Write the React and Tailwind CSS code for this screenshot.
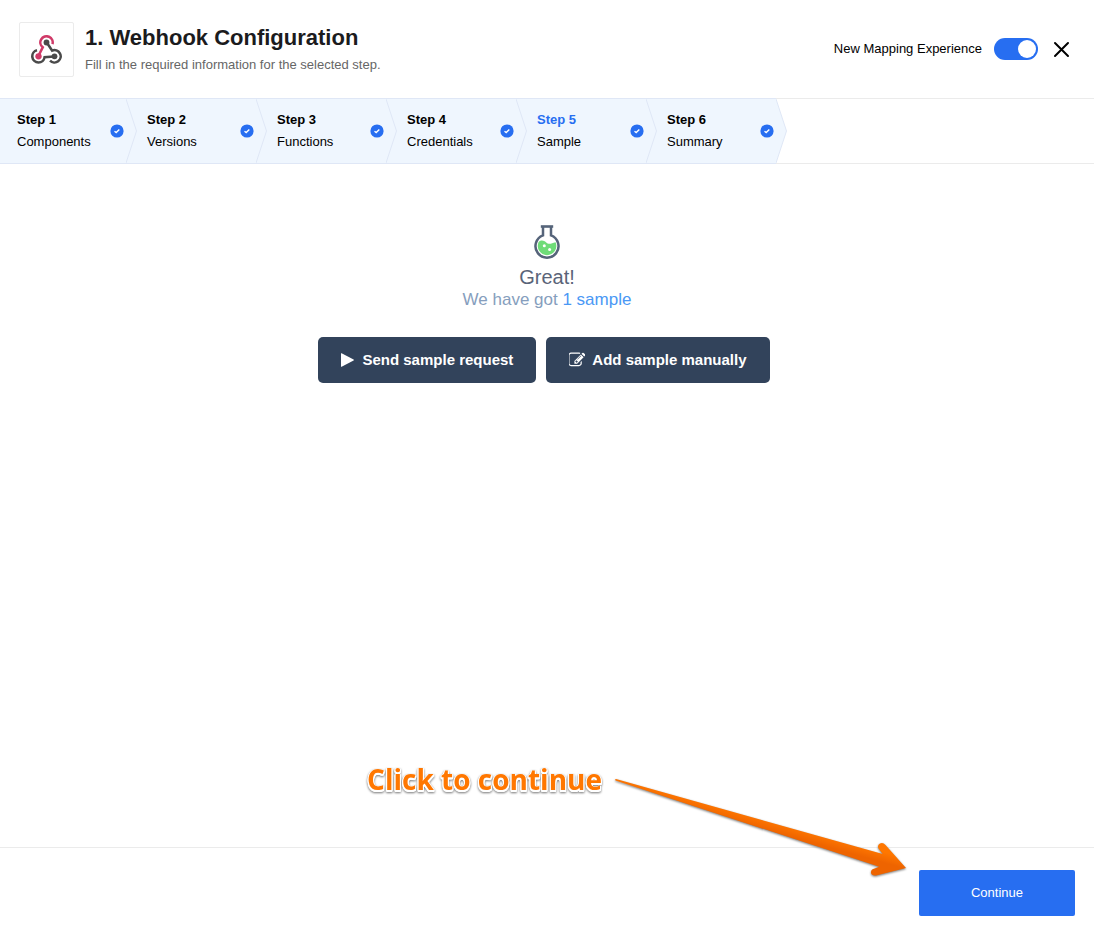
import React, { useState } from "react";

const STEPS = [
  { title: "Step 1", name: "Components" },
  { title: "Step 2", name: "Versions" },
  { title: "Step 3", name: "Functions" },
  { title: "Step 4", name: "Credentials" },
  { title: "Step 5", name: "Sample", current: true },
  { title: "Step 6", name: "Summary" },
];

function WebhookLogo() {
  const arm = "M177 74 A51 51 0 1 0 97 100 L62 170";
  return (
    <svg viewBox="0 0 256 236" className="h-[29px] w-[31px]" fill="none" strokeWidth="21" aria-hidden="true">
      <g stroke="#4a4a4a" fill="none">
        <path d={arm} transform="rotate(240 128 136)" />
        <circle cx="194" cy="174" r="24" fill="#4a4a4a" stroke="none" />
        <path d={arm} transform="rotate(120 128 136)" />
        <circle cx="128" cy="60" r="24" fill="#4a4a4a" stroke="none" />
      </g>
      <path d={arm} stroke="#d03a68" />
      <circle cx="62" cy="174" r="26" fill="#d03a68" />
    </svg>
  );
}

function CheckBadge() {
  return (
    <svg viewBox="0 0 14 14" className="size-[14px] shrink-0" aria-hidden="true">
      <circle cx="7" cy="7" r="6.6" fill="#276ef1" />
      <path d="M4.5 7.2 L6.2 8.6 L9.3 5.6" fill="none" stroke="#fff" strokeWidth="1.4" />
    </svg>
  );
}

function Flask() {
  return (
    <svg viewBox="0 0 26 34" className="h-[34px] w-[26px]" fill="none" aria-hidden="true">
      <path d="M4.6 17 C7 14.600 10 15.200 12 17.300 C14.400 19.700 17 18.800 21.600 17.200 A9.300 9.300 0 1 1 4.600 17 Z" fill="#6fdc78" />
      <path d="M9 1.5 V10.4 A11.500 11.500 0 1 0 17 10.4 V1.5" stroke="#56647a" strokeWidth="2.5" />
      <path d="M6.8 1.5 H19.2" stroke="#56647a" strokeWidth="2.6" />
      <circle cx="10.3" cy="20.8" r="1.5" fill="#fff" />
      <circle cx="15.6" cy="24.4" r="1.5" fill="#fff" />
    </svg>
  );
}

function EditIcon() {
  return (
    <svg viewBox="80 64 1664 1664" className="size-[16px]" fill="currentColor" aria-hidden="true">
      <path d="M888 1184l116-116-152-152-116 116v56h96v96h56zm440-720q-16-16-33 1l-350 350q-17 17-1 33t33-1l350-350q17-17 1-33zm80 594v190q0 119-84.500 203.500t-203.500 84.500h-832q-119 0-203.500-84.500t-84.500-203.500v-832q0-119 84.500-203.500t203.500-84.500h832q63 0 117 25 15 7 18 23 3 17-9 29l-49 49q-14 14-32 8-23-6-45-6h-832q-66 0-113 47t-47 113v832q0 66 47 113t113 47h832q66 0 113-47t47-113v-126q0-13 9-22l64-64q15-15 35-7t20 29zm-96-738l288 288-672 672h-288v-288zm444 132l-92 92-288-288 92-92q28-28 68-28t68 28l152 152q28 28 28 68t-28 68z" />
    </svg>
  );
}

function Step({ step }) {
  return (
    <li
      aria-current={step.current ? "step" : undefined}
      className="relative flex h-[66px] w-[130px] shrink-0 items-center border-y border-[#dfe7f6] bg-[#eff6fe] pl-[17px] last:w-[126px]"
    >
      <div className="w-[93px] text-[13px] leading-[22px]">
        <div className={step.current ? "font-bold text-[#276ef1]" : "font-bold"}>{step.title}</div>
        <div>{step.name}</div>
      </div>
      <CheckBadge />
      <svg viewBox="0 0 12 64" className="absolute left-[126px] top-0 z-10 h-[64px] w-[12px]" aria-hidden="true">
        <path d="M0 0 L10.5 32 L0 64" fill="#eff6fe" stroke="#dfe7f6" strokeWidth="1" />
      </svg>
    </li>
  );
}

export default function App() {
  const [mapping, setMapping] = useState(true);
  return (
    <div className="flex min-h-screen flex-col overflow-x-hidden bg-white font-['Liberation_Sans',Arial,sans-serif] text-black">
      <header className="flex h-[98px] items-center justify-between px-[19px]">
        <div className="flex items-center gap-[11px]">
          <div className="flex size-[55px] items-center justify-center rounded-[2px] border border-[#ebebeb]">
            <WebhookLogo />
          </div>
          <div className="pt-[4px]">
            <h1 className="text-[22px] leading-[28px] font-bold text-[#1b1b1d]">1. Webhook Configuration</h1>
            <p className="text-[13px] leading-[26px] text-[#666]">Fill in the required information for the selected step.</p>
          </div>
        </div>
        <div className="flex items-center pr-[5px]">
          <label htmlFor="mapping" className="text-[13px]">New Mapping Experience</label>
          <input
            id="mapping"
            type="checkbox"
            role="switch"
            checked={mapping}
            onChange={(e) => setMapping(e.target.checked)}
            className="ml-[12px] flex h-[22px] w-[44px] cursor-pointer appearance-none items-center rounded-full bg-gray-300 px-[2px] before:size-[18px] before:rounded-full before:bg-white checked:justify-end checked:bg-[#276ef1]"
          />
          <button type="button" aria-label="Close" className="ml-[15px] flex size-[17px] cursor-pointer items-center justify-center">
            <svg viewBox="0 0 17 17" className="size-[17px]" aria-hidden="true">
              <path d="M2 2 L15 15 M15 2 L2 15" stroke="#000" strokeWidth="2" strokeLinecap="round" />
            </svg>
          </button>
        </div>
      </header>

      <nav aria-label="Steps" className="flex">
        <ol className="flex">
          {STEPS.map((s) => (
            <Step key={s.title} step={s} />
          ))}
        </ol>
        <div className="grow border-y border-[#ebebeb]" />
      </nav>

      <main className="flex grow flex-col items-center pt-[61px]">
        <Flask />
        <h2 className="mt-[6px] text-[20px] leading-[24px] text-[#5a6478]">Great!</h2>
        <p className="text-[17px] leading-[21px] text-[#869ebd]">
          We have got <a href="#sample" className="text-[#4a98f5]">1 sample</a>
        </p>
        <div className="mt-[27px] flex gap-[10px] pr-[6px] text-[15px] font-bold text-white">
          <button type="button" className="flex h-[46px] cursor-pointer items-center gap-[7px] rounded-[5px] bg-[#32435b] px-[23px]">
            <svg viewBox="0 0 14 14" className="size-[14px]" fill="currentColor" aria-hidden="true">
              <path d="M0 0.6 V13.4 Q0 14 0.6 13.7 L12.6 7.4 Q13.1 7 12.6 6.6 L0.6 0.3 Q0 0 0 0.6 Z" />
            </svg>
            Send sample request
          </button>
          <button type="button" className="flex h-[46px] cursor-pointer items-center gap-[7px] rounded-[5px] bg-[#32435b] px-[23px]">
            <EditIcon />
            Add sample manually
          </button>
        </div>
      </main>

      <footer className="relative flex h-[87px] justify-end border-t border-[#ebebeb] pt-[22px] pr-[19px]">
        <button type="button" className="h-[46px] w-[156px] cursor-pointer rounded-[2px] bg-[#276ef1] text-[13px] text-white">
          Continue
        </button>
        <div className="pointer-events-none absolute right-[184px] bottom-[54px] flex items-start gap-[8px]">
          <span className="font-['Open_Sans','Noto_Sans',sans-serif] text-[28px] leading-[18px] font-bold whitespace-nowrap text-[#ff7700] [filter:drop-shadow(0_1px_0_#fff)_drop-shadow(1px_0_0_#fff)_drop-shadow(-1px_0_0_#fff)_drop-shadow(0_1px_0_#fff)_drop-shadow(0_1px_1px_#777)]">
            Click to continue
          </span>
          <svg viewBox="0 0 300 110" className="h-[110px] w-[300px]" aria-hidden="true">
            <defs>
              <linearGradient id="shaft" gradientUnits="userSpaceOnUse" x1="190" y1="50" x2="185" y2="68">
                <stop offset="0.45" stopColor="#ff7700" />
                <stop offset="1" stopColor="#ee6400" />
              </linearGradient>
            </defs>
            <path
              className="[filter:drop-shadow(0_1px_1px_#777)]"
              d="M6 9 L272.7 84 L268.5 78.5 Q267 75 270 73.4 Q273 72 275.5 75 L296 98 L266 105.5 Q261.5 106 261 102.8 Q260.8 99.6 264 98.8 L269.3 96.8 L5.5 10.5 Q4.6 9 6 9 Z"
              fill="url(#shaft)"
            />
          </svg>
        </div>
      </footer>
    </div>
  );
}
